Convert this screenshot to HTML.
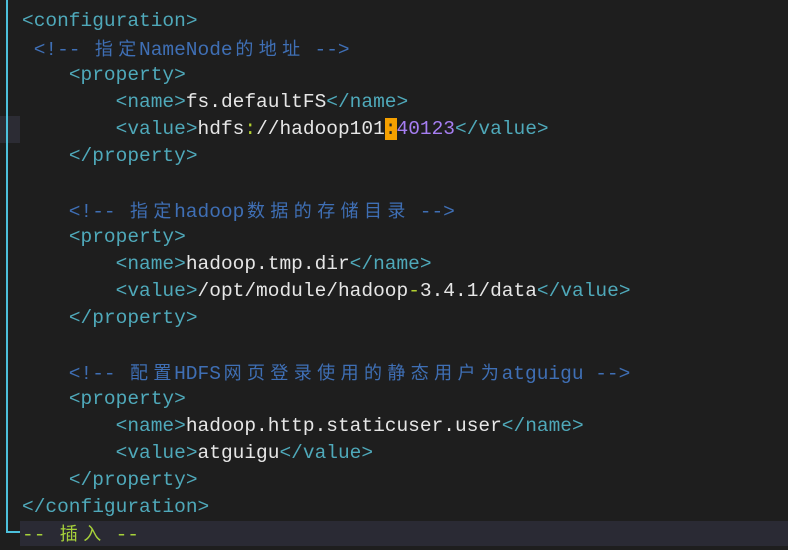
<!DOCTYPE html>
<html><head><meta charset="utf-8"><style>
body{margin:0;width:788px;height:550px;background:#1e1e1e;overflow:hidden;position:relative;font-family:"Liberation Mono","Noto Sans CJK SC",monospace;font-size:19.5px;}
.l{position:absolute;left:22px;height:27px;line-height:27px;white-space:pre;color:#e6e6e6;}
.t{color:#4fa9ba}.c{color:#3f6fb5}.p{color:#a67ef2}.y{color:#b3d130}
.k{display:inline-block;width:23.4px;text-align:center;font-family:"Noto Sans CJK SC",sans-serif;font-size:18px;}
.hl{background:#f5a000;color:#222}
</style></head><body>
<div style="position:absolute;left:0;top:116px;width:20px;height:27px;background:#2c2c34"></div>
<div style="position:absolute;left:6px;top:0;width:2px;height:532px;background:#4cc0dc"></div>
<div style="position:absolute;left:6px;top:531px;width:14px;height:2px;background:#4cc0dc"></div>
<div style="position:absolute;left:20px;top:521px;width:768px;height:25px;background:#2a2a34"></div>
<div class="l" style="top:8px"><span class="t">&lt;configuration&gt;</span></div>
<div class="l" style="top:35px"><span class="c"> &lt;!-- <span class="k">指</span><span class="k">定</span>NameNode<span class="k">的</span><span class="k">地</span><span class="k">址</span> --&gt;</span></div>
<div class="l" style="top:62px">    <span class="t">&lt;property&gt;</span></div>
<div class="l" style="top:89px">        <span class="t">&lt;name&gt;</span>fs.defaultFS<span class="t">&lt;/name&gt;</span></div>
<div class="l" style="top:116px">        <span class="t">&lt;value&gt;</span>hdfs<span class="y">:</span>//hadoop101<span class="hl">:</span><span class="p">40123</span><span class="t">&lt;/value&gt;</span></div>
<div class="l" style="top:143px">    <span class="t">&lt;/property&gt;</span></div>
<div class="l" style="top:197px"><span class="c">    &lt;!-- <span class="k">指</span><span class="k">定</span>hadoop<span class="k">数</span><span class="k">据</span><span class="k">的</span><span class="k">存</span><span class="k">储</span><span class="k">目</span><span class="k">录</span> --&gt;</span></div>
<div class="l" style="top:224px">    <span class="t">&lt;property&gt;</span></div>
<div class="l" style="top:251px">        <span class="t">&lt;name&gt;</span>hadoop.tmp.dir<span class="t">&lt;/name&gt;</span></div>
<div class="l" style="top:278px">        <span class="t">&lt;value&gt;</span>/opt/module/hadoop<span class="y">-</span>3.4.1/data<span class="t">&lt;/value&gt;</span></div>
<div class="l" style="top:305px">    <span class="t">&lt;/property&gt;</span></div>
<div class="l" style="top:359px"><span class="c">    &lt;!-- <span class="k">配</span><span class="k">置</span>HDFS<span class="k">网</span><span class="k">页</span><span class="k">登</span><span class="k">录</span><span class="k">使</span><span class="k">用</span><span class="k">的</span><span class="k">静</span><span class="k">态</span><span class="k">用</span><span class="k">户</span><span class="k">为</span>atguigu --&gt;</span></div>
<div class="l" style="top:386px">    <span class="t">&lt;property&gt;</span></div>
<div class="l" style="top:413px">        <span class="t">&lt;name&gt;</span>hadoop.http.staticuser.user<span class="t">&lt;/name&gt;</span></div>
<div class="l" style="top:440px">        <span class="t">&lt;value&gt;</span>atguigu<span class="t">&lt;/value&gt;</span></div>
<div class="l" style="top:467px">    <span class="t">&lt;/property&gt;</span></div>
<div class="l" style="top:494px"><span class="t">&lt;/configuration&gt;</span></div>
<div class="l" style="top:521px;height:25px;line-height:25px;color:#a6d13a">-- <span class="k">插</span><span class="k">入</span> --</div>
</body></html>
